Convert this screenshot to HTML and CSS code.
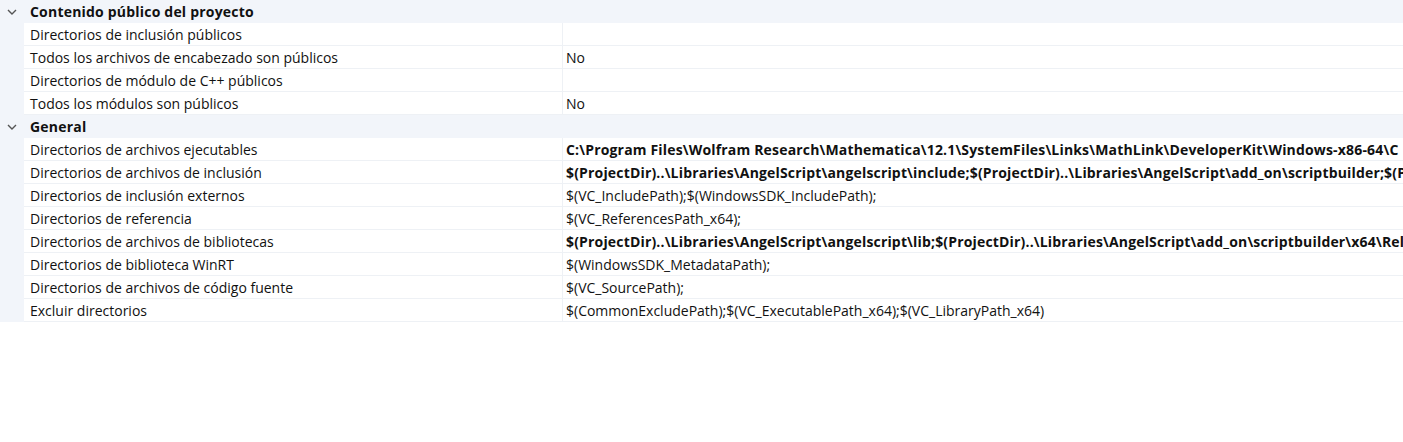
FILE: index.html
```html
<!DOCTYPE html>
<html>
<head>
<meta charset="utf-8">
<link rel="stylesheet" href="styles.css">
</head>
<body>
<div class="grid">
  <div class="cat">
    <span class="chev"><svg width="10" height="6" viewBox="0 0 10 6"><path d="M1 1 L5 5 L9 1" fill="none" stroke="#555" stroke-width="1.4"/></svg></span>
    <span class="cat-title">Contenido público del proyecto</span>
  </div>
  <div class="row"><div class="gut"></div><div class="name">Directorios de inclusión públicos</div><div class="val"></div></div>
  <div class="row"><div class="gut"></div><div class="name">Todos los archivos de encabezado son públicos</div><div class="val">No</div></div>
  <div class="row"><div class="gut"></div><div class="name">Directorios de módulo de C++ públicos</div><div class="val"></div></div>
  <div class="row"><div class="gut"></div><div class="name">Todos los módulos son públicos</div><div class="val">No</div></div>
  <div class="cat">
    <span class="chev"><svg width="10" height="6" viewBox="0 0 10 6"><path d="M1 1 L5 5 L9 1" fill="none" stroke="#555" stroke-width="1.4"/></svg></span>
    <span class="cat-title">General</span>
  </div>
  <div class="row"><div class="gut"></div><div class="name">Directorios de archivos ejecutables</div><div class="val bold">C:\Program Files\Wolfram Research\Mathematica\12.1\SystemFiles\Links\MathLink\DeveloperKit\Windows-x86-64\C</div></div>
  <div class="row"><div class="gut"></div><div class="name">Directorios de archivos de inclusión</div><div class="val bold">$(ProjectDir)..\Libraries\AngelScript\angelscript\include;$(ProjectDir)..\Libraries\AngelScript\add_on\scriptbuilder;$(Pr</div></div>
  <div class="row"><div class="gut"></div><div class="name">Directorios de inclusión externos</div><div class="val">$(VC_IncludePath);$(WindowsSDK_IncludePath);</div></div>
  <div class="row"><div class="gut"></div><div class="name">Directorios de referencia</div><div class="val">$(VC_ReferencesPath_x64);</div></div>
  <div class="row"><div class="gut"></div><div class="name">Directorios de archivos de bibliotecas</div><div class="val bold">$(ProjectDir)..\Libraries\AngelScript\angelscript\lib;$(ProjectDir)..\Libraries\AngelScript\add_on\scriptbuilder\x64\Rele</div></div>
  <div class="row"><div class="gut"></div><div class="name">Directorios de biblioteca WinRT</div><div class="val">$(WindowsSDK_MetadataPath);</div></div>
  <div class="row"><div class="gut"></div><div class="name">Directorios de archivos de código fuente</div><div class="val">$(VC_SourcePath);</div></div>
  <div class="row"><div class="gut"></div><div class="name">Excluir directorios</div><div class="val">$(CommonExcludePath);$(VC_ExecutablePath_x64);$(VC_LibraryPath_x64)</div></div>
</div>
</body>
</html>
```
FILE: styles.css
```css
html, body {
  margin: 0;
  padding: 0;
  background: #ffffff;
}
body {
  font-family: "Open Sans", "Noto Sans", sans-serif;
  font-size: 14px;
  color: #111111;
  overflow: hidden;
}
.grid {
  display: flex;
  flex-direction: column;
  width: 1403px;
}
.cat {
  display: flex;
  align-items: center;
  height: 23px;
  background: #f2f5fa;
}
.chev {
  width: 24px;
  display: flex;
  justify-content: center;
  align-items: center;
}
.chev svg { display: block; margin-left: -1px; }
.cat-title {
  font-weight: 700;
  padding-left: 6px;
  letter-spacing: 0.2px;
}
.row {
  display: grid;
  grid-template-columns: 24px 539px 1fr;
  height: 23px;
}
.gut {
  background: #f2f5fa;
}
.name, .val {
  display: flex;
  align-items: center;
  border-bottom: 1px solid #eef1f5;
  white-space: nowrap;
  overflow: hidden;
  box-sizing: border-box;
}
.name {
  padding-left: 6px;
  border-right: 1px solid #eef1f5;
}
.val {
  padding-left: 3px;
}
.bold {
  font-weight: 700;
  letter-spacing: 0.17px;
}
```
